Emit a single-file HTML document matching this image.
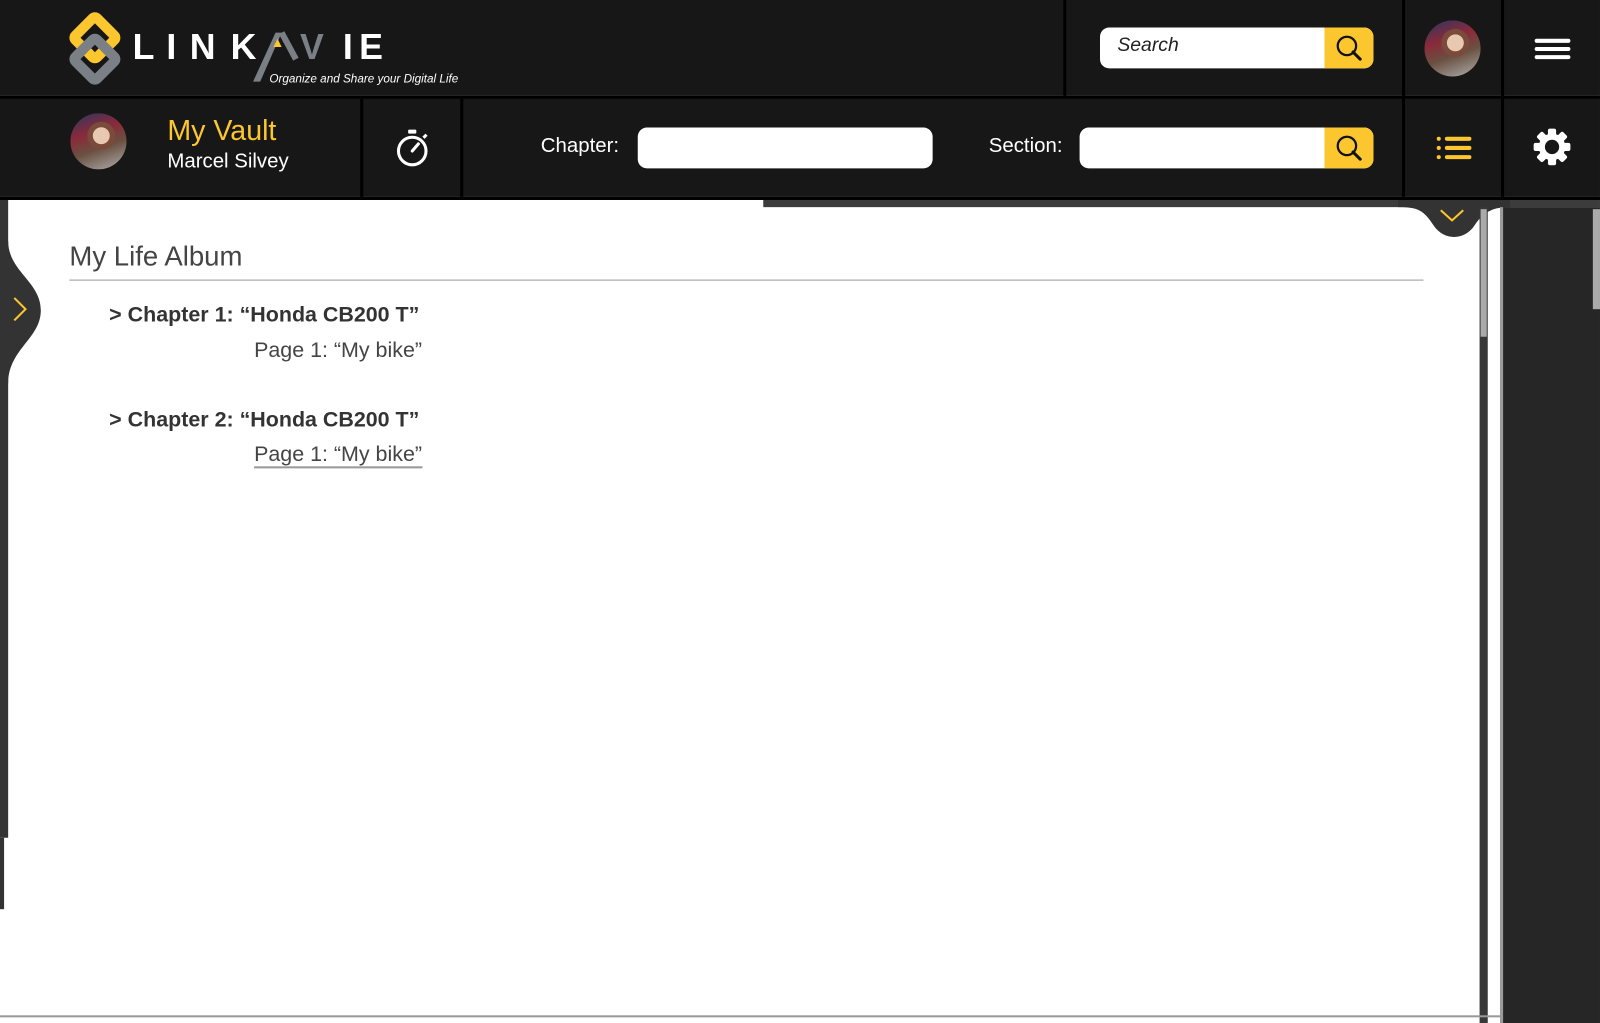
<!DOCTYPE html>
<html><head><meta charset="utf-8"><style>
*{margin:0;padding:0;box-sizing:border-box}
body{width:1600px;height:1017px;background:#fff;position:relative;overflow:hidden;font-family:"Liberation Sans",sans-serif}
#w{position:absolute;left:0;top:0;width:1568px;height:997px;transform:scale(1.0204);transform-origin:0 0}
.a{position:absolute}
.bar{background:#171717}
.vl{position:absolute;width:3px;background:#000}
.inp{position:absolute;background:#fff;border-radius:9px}
.sb{position:absolute;background:#fcc62e;border-radius:0 9px 9px 0;width:48px}
.av{position:absolute;border-radius:50%;background:radial-gradient(circle at 55% 40%,#e8c8b0 0 18%,#7a4a3a 19% 30%,transparent 31%),linear-gradient(160deg,#2a3660 0%,#8a2a3a 35%,#6a5040 60%,#b0b0b0 100%);overflow:hidden}
.lg{font-family:"Liberation Sans";font-weight:bold;font-size:35px}
</style></head><body><div id="w">
<div class="a bar" style="left:0;top:0;width:1568px;height:94px"></div>
<div class="a" style="left:0;top:94px;width:1568px;height:3px;background:#000"></div>
<div class="a bar" style="left:0;top:97px;width:1568px;height:96px"></div>
<div class="a" style="left:0;top:193px;width:1568px;height:3px;background:#000"></div>
<div class="vl" style="left:1042px;top:0;height:94px"></div>
<div class="vl" style="left:1374px;top:0;height:193px"></div>
<div class="vl" style="left:1471px;top:0;height:193px"></div>
<div class="vl" style="left:353px;top:97px;height:96px"></div>
<div class="vl" style="left:451px;top:97px;height:96px"></div>

<svg class="a" style="left:66px;top:10px" width="400" height="80">
<rect x="12" y="12" width="30" height="30" transform="rotate(45 27 27)" fill="none" stroke="#fcc62e" stroke-width="10" rx="3"/>
<rect x="12" y="33" width="30" height="30" transform="rotate(45 27 48)" fill="none" stroke="#7b7f86" stroke-width="10" rx="3"/>
<g fill="#fff" class="lg">
<text x="64" y="48" class="lg">L</text><text x="97" y="48" class="lg">I</text><text x="120" y="48" class="lg">N</text><text x="160" y="48" class="lg">K</text>
<text x="270" y="48" class="lg">I</text><text x="286" y="48" class="lg">E</text></g>
<path d="M182 70 L204 22 L210 22 L189 70Z" fill="#7b7f86"/>
<path d="M202 36 L206 28 L210 36Z" fill="#fcc62e"/>
<path d="M210 22 L224 48" stroke="#7b7f86" stroke-width="6" fill="none"/>
<text x="228" y="48" fill="#7b7f86" class="lg">V</text>
<text x="198" y="71" fill="#fff" font-family="Liberation Sans" font-style="italic" font-size="11.5">Organize and Share your Digital Life</text>
</svg>

<div class="inp" style="left:1078px;top:27px;width:268px;height:40px"></div>
<div class="a" style="left:1095px;top:34px;font-size:19px;font-style:italic;color:#222">Search</div>
<div class="sb" style="left:1298px;top:27px;height:40px"></div>
<svg class="a" style="left:1306px;top:32px" width="32" height="32"><circle cx="14" cy="13" r="9" fill="none" stroke="#111" stroke-width="2.2"/><path d="M20 19 L27 26" stroke="#111" stroke-width="3" stroke-linecap="round"/></svg>
<div class="av" style="left:1396px;top:20px;width:55px;height:55px"></div>
<div class="a" style="left:1504px;top:38px;width:35px;height:4px;background:#fff;border-radius:2px"></div>
<div class="a" style="left:1504px;top:46px;width:35px;height:4px;background:#fff;border-radius:2px"></div>
<div class="a" style="left:1504px;top:54px;width:35px;height:4px;background:#fff;border-radius:2px"></div>

<div class="av" style="left:69px;top:111px;width:55px;height:55px"></div>
<div class="a" style="left:164px;top:112px;font-size:28px;color:#fcc62e">My Vault</div>
<div class="a" style="left:164px;top:147px;font-size:20px;color:#fff">Marcel Silvey</div>
<svg class="a" style="left:384px;top:124px" width="40" height="42"><rect x="16" y="3" width="8" height="4" fill="#fff" rx="1"/><circle cx="20" cy="24" r="13.5" fill="none" stroke="#fff" stroke-width="3"/><path d="M20 24 L26 17" stroke="#fff" stroke-width="3" stroke-linecap="round"/><path d="M31 11 L34 8" stroke="#fff" stroke-width="3"/></svg>
<div class="a" style="left:530px;top:132px;font-size:20px;color:#fff">Chapter:</div>
<div class="inp" style="left:625px;top:125px;width:289px;height:40px"></div>
<div class="a" style="left:969px;top:132px;font-size:20px;color:#fff">Section:</div>
<div class="inp" style="left:1058px;top:125px;width:288px;height:40px"></div>
<div class="sb" style="left:1298px;top:125px;height:40px"></div>
<svg class="a" style="left:1306px;top:130px" width="32" height="32"><circle cx="14" cy="13" r="9" fill="none" stroke="#111" stroke-width="2.2"/><path d="M20 19 L27 26" stroke="#111" stroke-width="3" stroke-linecap="round"/></svg>
<svg class="a" style="left:1404px;top:130px" width="40" height="30" fill="#fcc62e"><circle cx="6" cy="6" r="2"/><circle cx="6" cy="15" r="2"/><circle cx="6" cy="24" r="2"/><rect x="12" y="4" width="26" height="4" rx="2"/><rect x="12" y="13" width="26" height="4" rx="2"/><rect x="12" y="22" width="26" height="4" rx="2"/></svg>
<svg class="a" style="left:1502px;top:125px" width="38" height="38" viewBox="0 0 38 38"><g fill="#fff" transform="translate(19 19)"><rect x="-4" y="-18" width="8" height="36" rx="2"/><rect x="-4" y="-18" width="8" height="36" rx="2" transform="rotate(45)"/><rect x="-4" y="-18" width="8" height="36" rx="2" transform="rotate(90)"/><rect x="-4" y="-18" width="8" height="36" rx="2" transform="rotate(135)"/><circle r="13"/></g><circle cx="19" cy="19" r="7" fill="#171717"/></svg>

<div class="a" style="left:748px;top:196px;width:820px;height:7px;background:#3c3c3c"></div>
<svg class="a" style="left:1370px;top:196px" width="110" height="42"><path d="M0 7 C20 7 25 10 35 25 C45 40 65 40 75 25 C85 10 95 7 110 7 L110 0 L0 0Z" fill="#333"/><path d="M42 10 L53 20 L64 10" stroke="#fcc62e" stroke-width="2" fill="none"/></svg>

<div class="a" style="left:1473px;top:203px;width:95px;height:800px;background:#262626"></div>
<div class="a" style="left:1561px;top:205px;width:7px;height:98px;background:#aaa"></div>
<div class="a" style="left:1470px;top:203px;width:3px;height:800px;background:#999"></div>
<div class="a" style="left:1450px;top:203px;width:8px;height:800px;background:#383838"></div>
<div class="a" style="left:1451px;top:205px;width:6px;height:125px;background:#aaa"></div>

<div class="a" style="left:0;top:196px;width:8px;height:625px;background:#333"></div>
<div class="a" style="left:0;top:821px;width:4px;height:70px;background:#333"></div>
<svg class="a" style="left:0;top:236px" width="42" height="140"><path d="M8 0 C8 30 40 40 40 68 C40 96 8 106 8 140 L0 140 L0 0Z" fill="#333"/><path d="M14 56 L25 67 L14 78" stroke="#fcc62e" stroke-width="2" fill="none"/></svg>

<div class="a" style="left:68px;top:236px;font-size:27px;color:#444">My Life Album</div>
<div class="a" style="left:68px;top:274px;width:1327px;height:1px;background:#999"></div>
<div class="a" style="left:107px;top:297px;font-size:21px;font-weight:bold;color:#333">&gt; Chapter 1: “Honda CB200 T”</div>
<div class="a" style="left:249px;top:332px;font-size:21px;color:#444">Page 1: “My bike”</div>
<div class="a" style="left:107px;top:400px;font-size:21px;font-weight:bold;color:#333">&gt; Chapter 2: “Honda CB200 T”</div>
<div class="a" style="left:249px;top:435px;font-size:21px;color:#444;border-bottom:2px solid #999;line-height:22px">Page 1: “My bike”</div>
<div class="a" style="left:0;top:995px;width:1470px;height:2px;background:#999"></div>
</div></body></html>
